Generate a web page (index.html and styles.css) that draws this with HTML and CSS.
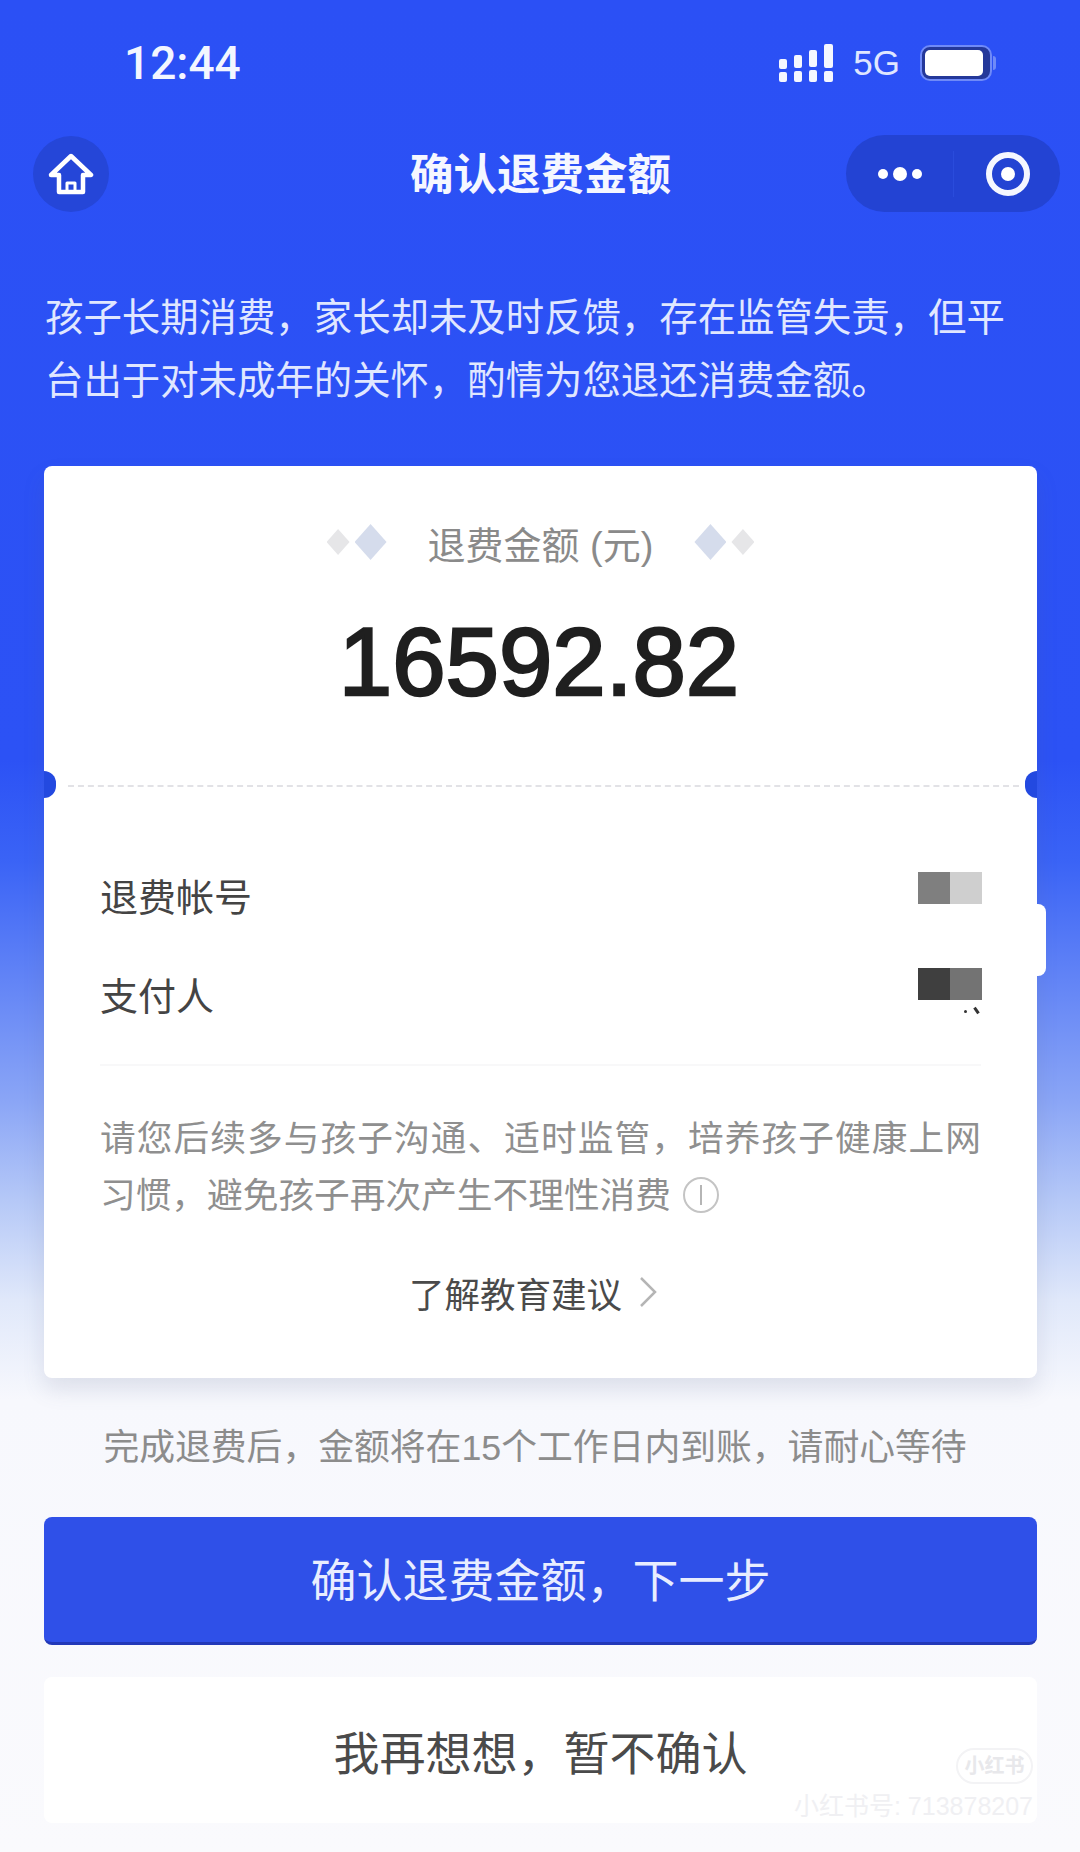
FILE: index.html
```html
<!DOCTYPE html>
<html lang="zh-CN">
<head>
    <meta charset="UTF-8">
    <meta name="viewport" content="width=device-width, initial-scale=1.0">
    <title>确认退费金额</title>
    <link rel="stylesheet" href="styles.css">
</head>
<body>
    <div class="page">
        <div class="status-bar">
            <span class="time">12:44</span>
            <div class="status-icons">
                <svg class="signal" width="54" height="38" viewBox="0 0 54 38">
                    <rect x="0" y="15" width="8" height="10" rx="2"/>
                    <rect x="0" y="28" width="8" height="10" rx="2"/>
                    <rect x="15" y="11" width="8" height="13" rx="2"/>
                    <rect x="15" y="27" width="8" height="11" rx="2"/>
                    <rect x="30" y="6" width="8" height="17" rx="2"/>
                    <rect x="30" y="26" width="8" height="12" rx="2"/>
                    <rect x="45" y="0" width="9" height="24" rx="2"/>
                    <rect x="45" y="27" width="9" height="11" rx="2"/>
                </svg>
                <span class="network">5G</span>
                <span class="battery"><span class="battery-fill"></span></span>
            </div>
        </div>

        <header class="nav">
            <div class="home-btn">
                <svg width="46" height="42" viewBox="0 0 46 42" fill="none" stroke="#fff" stroke-width="4.5" stroke-linejoin="round">
                    <path d="M23 3 L43 22 L35 22 L35 39 L11 39 L11 22 L3 22 Z"/>
                    <path d="M19 39 L19 30 L27 30 L27 39" stroke-width="3"/>
                </svg>
            </div>
            <h1 class="nav-title">确认退费金额</h1>
            <div class="capsule">
                <div class="capsule-dots"><i></i><i class="big"></i><i></i></div>
                <div class="capsule-target"><i></i></div>
            </div>
        </header>

        <p class="intro">孩子长期消费，家长却未及时反馈，存在监管失责，但平台出于对未成年的关怀，酌情为您退还消费金额。</p>

        <section class="card">
            <div class="amount-box">
                <div class="amount-label">
                    <span class="diamonds"><i class="small"></i><i></i></span>
                    <span class="label-text">退费金额 (元)</span>
                    <span class="diamonds"><i></i><i class="small"></i></span>
                </div>
                <div class="amount">16592.82</div>
            </div>

            <div class="detail">
                <div class="row">
                    <span>退费帐号</span>
                    <span class="mosaic"><i class="m-mid"></i><i class="m-light"></i></span>
                </div>
                <div class="row">
                    <span>支付人</span>
                    <span class="mosaic"><i class="m-dark"></i><i class="m-grey"></i><em class="speck speck-a"></em><em class="speck speck-b"></em></span>
                </div>
                <div class="faint-line"></div>
                <p class="advice">请您后续多与孩子沟通、适时监管，培养孩子健康上网习惯，避免孩子再次产生不理性消费<span class="info-icon"><i></i></span></p>
                <div class="learn-more">
                    <span>了解教育建议</span>
                    <svg width="18" height="30" viewBox="0 0 18 30" fill="none" stroke="#b5b5b5" stroke-width="2.5"><path d="M2 1 L16 15 L2 29"/></svg>
                </div>
            </div>
        </section>

        <p class="arrival">完成退费后，金额将在15个工作日内到账，请耐心等待</p>

        <button class="btn-primary">确认退费金额，下一步</button>
        <button class="btn-plain">我再想想，暂不确认</button>

        <div class="watermark">
            <span class="wm-logo">小红书</span>
            <span class="wm-id">小红书号: 713878207</span>
        </div>
    </div>
</body>
</html>
```

FILE: styles.css
```css
* {
    box-sizing: border-box;
}
body {
    margin: 0;
    font-family: "Liberation Sans", "Noto Sans CJK SC", sans-serif;
}
.page {
    position: relative;
    width: 1080px;
    height: 1852px;
    overflow: hidden;
    padding: 0 43px 0 44px;
    background: linear-gradient(180deg, #2b50f5 0, #2c52f5 760px, #3a63f6 860px, #8aa5f6 1100px, #b5c8f7 1200px, #e0e8fa 1300px, #f7f8fd 1400px, #fafafd 1852px);
}

/* status bar */
.status-bar {
    height: 126px;
    margin: 0 -43px 0 -44px;
    padding: 0 88px 0 124px;
    display: flex;
    align-items: center;
    justify-content: space-between;
    color: #fff;
}
.time {
    font-size: 46px;
    font-family: "Roboto", sans-serif;
    font-weight: 500;
    color: #f3f6ff;
}
.status-icons {
    display: flex;
    align-items: center;
}
.signal {
    fill: #f5f7ff;
}
.network {
    margin-left: 20px;
    font-size: 35px;
    color: #dfe6ff;
}
.battery {
    position: relative;
    margin-left: 20px;
    width: 72px;
    height: 36px;
    padding: 3px;
    border: 2px solid #6f8af8;
    border-radius: 10px;
    background: #24389a;
    display: block;
}
.battery::after {
    content: "";
    position: absolute;
    right: -6px;
    top: 9px;
    width: 3px;
    height: 14px;
    border-radius: 0 3px 3px 0;
    background: #6f8af8;
}
.battery-fill {
    display: block;
    height: 100%;
    width: 58px;
    border-radius: 5px;
    background: #fff;
}

/* nav */
.nav {
    height: 77px;
    margin: 9px -23px 0 -11px;
    display: grid;
    grid-template-columns: 1fr auto 1fr;
    align-items: center;
}
.home-btn {
    width: 76px;
    height: 76px;
    border-radius: 50%;
    background: #2546d8;
    display: flex;
    align-items: center;
    justify-content: center;
}
.nav-title {
    margin: -4px 12px 0 0;
    font-size: 43.5px;
    font-weight: 700;
    color: #f5f7ff;
}
.capsule {
    justify-self: end;
    width: 214px;
    height: 77px;
    border-radius: 39px;
    background: #2343d3;
    display: flex;
    align-items: center;
}
.capsule-dots {
    width: 108px;
    height: 46px;
    padding-left: 32px;
    border-right: 1px solid #2a4cdc;
    display: flex;
    align-items: center;
    gap: 5px;
}
.capsule-dots i {
    width: 10px;
    height: 10px;
    border-radius: 50%;
    background: #fff;
}
.capsule-dots i.big {
    width: 14px;
    height: 14px;
}
.capsule-target {
    width: 44px;
    height: 44px;
    margin-left: 32px;
    border: 6px solid #f5f7ff;
    border-radius: 50%;
    display: flex;
    align-items: center;
    justify-content: center;
}
.capsule-target i {
    width: 14px;
    height: 14px;
    border-radius: 50%;
    background: #fff;
}

.intro {
    margin: 74px 0 54px 1px;
    width: 970px;
    font-size: 38.4px;
    line-height: 63px;
    color: #e0e7ff;
}

/* card */
.card {
    position: relative;
    height: 912px;
    border-radius: 8px;
    background: #fff;
    box-shadow: 0 12px 22px rgba(90, 100, 130, 0.14);
}
.card::after {
    content: "";
    position: absolute;
    right: -9px;
    top: 438px;
    width: 9px;
    height: 72px;
    border-radius: 0 8px 8px 0;
    background: #fff;
}
.amount-box {
    height: 319px;
    padding-top: 51px;
    text-align: center;
}
.amount-label {
    height: 50px;
    display: flex;
    align-items: center;
    justify-content: center;
}
.label-text {
    margin: 0 41px;
    font-size: 38px;
    color: #8a8a8a;
}
.diamonds {
    display: flex;
    align-items: center;
    gap: 5px;
}
.diamonds i {
    width: 32px;
    height: 36px;
    background: #d5dcec;
    clip-path: polygon(50% 0, 100% 50%, 50% 100%, 0 50%);
}
.diamonds i.small {
    width: 23px;
    height: 26px;
    background: #e6e6e8;
}
.amount {
    margin-top: 40px;
    margin-left: -3px;
    font-family: "Liberation Sans", sans-serif;
    font-size: 96px;
    line-height: 110px;
    color: #1f1f1f;
    -webkit-text-stroke: 2.5px #1f1f1f;
}

/* lower part of the ticket */
.detail {
    position: relative;
    padding: 64px 56px 0 56px;
    color: #444;
}
.detail::before {
    content: "";
    position: absolute;
    top: 0;
    left: 24px;
    right: 18px;
    border-top: 2px dashed #e2e2e6;
}
.amount-box::before,
.amount-box::after {
    content: "";
    position: absolute;
    top: 305px;
    width: 12px;
    height: 27px;
    background: #2349e0;
}
.amount-box::before {
    left: 0;
    border-radius: 0 14px 14px 0;
}
.amount-box::after {
    right: 0;
    border-radius: 14px 0 0 14px;
}
.row {
    height: 99px;
    display: flex;
    justify-content: space-between;
    font-size: 38px;
    line-height: 99px;
    position: relative;
}
.mosaic {
    display: flex;
    height: 32px;
    margin: 23px -1px 0 0;
    position: relative;
}
.row + .row .mosaic {
    margin-top: 20px;
}
.mosaic i {
    width: 32px;
    height: 32px;
}
.m-mid {
    background: #7f7f7f;
}
.m-light {
    background: #cfcfcf;
}
.m-dark {
    background: #3f3f3f;
}
.m-grey {
    background: #737373;
}
.speck {
    position: absolute;
    background: #333;
}
.speck-a {
    right: 15px;
    top: 42px;
    width: 3px;
    height: 3px;
    border-radius: 50%;
}
.speck-b {
    right: 4px;
    top: 39px;
    width: 3px;
    height: 7px;
    transform: rotate(-35deg);
}
.faint-line {
    height: 2px;
    margin-top: 17px;
    background: #f8f8f9;
}
.advice {
    margin: 45px 0 45px;
    font-size: 35.7px;
    line-height: 57px;
    text-align: justify;
    color: #8f8f8f;
}
.info-icon {
    display: inline-flex;
    align-items: center;
    justify-content: center;
    width: 36px;
    height: 36px;
    margin-left: 12px;
    vertical-align: 3px;
    border: 2px solid #c4c4c4;
    border-radius: 50%;
}
.info-icon i {
    width: 2px;
    height: 20px;
    background: #b5b5b5;
}
.learn-more {
    height: 50px;
    margin: -3px 0 0 -15px;
    display: flex;
    align-items: center;
    justify-content: center;
    gap: 17px;
    font-size: 35.5px;
    color: #4a4a4a;
}

.arrival {
    margin: 45px 0 44px -11px;
    font-size: 35.8px;
    line-height: 50px;
    text-align: center;
    color: #8c8c8c;
}
.btn-primary,
.btn-plain {
    display: block;
    width: 100%;
    font-family: inherit;
    font-size: 46px;
    border: none;
    border-radius: 8px;
}
.btn-primary {
    height: 128px;
    padding-bottom: 6px;
    background: #2f50e8;
    border-bottom: 3px solid #2238b8;
    color: #e8edff;
}
.btn-plain {
    height: 146px;
    margin-top: 32px;
    background: #fff;
    color: #4a4a4a;
}

/* watermark */
.watermark {
    position: absolute;
    right: 47px;
    top: 1748px;
    display: flex;
    flex-direction: column;
    align-items: flex-end;
}
.wm-logo {
    width: 77px;
    height: 36px;
    border: 2px solid #f3f3f5;
    border-radius: 18px;
    font-size: 20px;
    font-weight: 700;
    line-height: 32px;
    text-align: center;
    color: #e8e8eb;
}
.wm-id {
    margin-top: 6px;
    font-size: 25px;
    line-height: 32px;
    color: #f0f0f3;
    white-space: nowrap;
}
```
